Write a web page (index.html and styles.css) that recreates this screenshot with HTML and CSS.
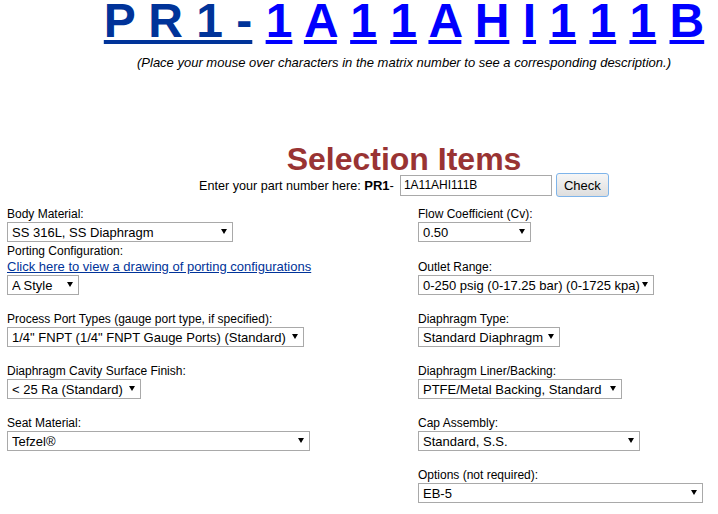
FILE: index.html
```html
<!DOCTYPE html>
<html>
<head>
<meta charset="utf-8">
<title>Selection Items</title>
<link rel="stylesheet" href="styles.css">
</head>
<body>
<div class="top">
  <div class="matrix"><span class="base">P R 1 -</span> <a class="ch" href="#">1</a> <a class="ch" href="#">A</a> <a class="ch" href="#">1</a> <a class="ch" href="#">1</a> <a class="ch" href="#">A</a> <a class="ch" href="#">H</a> <a class="ch" href="#">I</a> <a class="ch" href="#">1</a> <a class="ch" href="#">1</a> <a class="ch" href="#">1</a> <a class="ch" href="#">B</a></div>
  <p class="hint">(Place your mouse over characters in the matrix number to see a corresponding description.)</p>
  <h1 class="title">Selection Items</h1>
  <form class="entry">
    <span class="entry-text"><span class="entry-lbl">Enter your part number here: </span><b>PR1</b>-</span>
    <input class="part" type="text" value="1A11AHI111B">
    <button class="check" type="button">Check</button>
  </form>
</div>

<div class="grid">
  <div class="field">
    <label for="body">Body Material:</label>
    <span class="sel"><select id="body" class="w-body"><option>SS 316L, SS Diaphragm</option></select></span>
  </div>
  <div class="field">
    <label for="flow">Flow Coefficient (Cv):</label>
    <span class="sel"><select id="flow" class="w-flow"><option>0.50</option></select></span>
  </div>

  <div class="field">
    <label for="port">Porting Configuration:</label>
    <a class="link" href="#">Click here to view a drawing of porting configurations</a>
    <span class="sel"><select id="port" class="w-style"><option>A Style</option></select></span>
  </div>
  <div class="field">
    <label for="outlet">Outlet Range:</label>
    <span class="sel"><select id="outlet" class="w-outlet"><option>0-250 psig (0-17.25 bar) (0-1725 kpa)</option></select></span>
  </div>

  <div class="field">
    <label for="ptype">Process Port Types (gauge port type, if specified):</label>
    <span class="sel"><select id="ptype" class="w-ptype"><option>1/4" FNPT (1/4" FNPT Gauge Ports) (Standard)</option></select></span>
  </div>
  <div class="field">
    <label for="dtype">Diaphragm Type:</label>
    <span class="sel"><select id="dtype" class="w-dtype"><option>Standard Diaphragm</option></select></span>
  </div>

  <div class="field">
    <label for="finish">Diaphragm Cavity Surface Finish:</label>
    <span class="sel"><select id="finish" class="w-finish"><option>&lt; 25 Ra (Standard)</option></select></span>
  </div>
  <div class="field">
    <label for="liner">Diaphragm Liner/Backing:</label>
    <span class="sel"><select id="liner" class="w-liner"><option>PTFE/Metal Backing, Standard</option></select></span>
  </div>

  <div class="field">
    <label for="seat">Seat Material:</label>
    <span class="sel"><select id="seat" class="w-seat"><option>Tefzel®</option></select></span>
  </div>
  <div class="field">
    <label for="cap">Cap Assembly:</label>
    <span class="sel"><select id="cap" class="w-cap"><option>Standard, S.S.</option></select></span>
  </div>

  <div class="field field-right">
    <label for="opt">Options (not required):</label>
    <span class="sel"><select id="opt" class="w-opt"><option>EB-5</option></select></span>
  </div>
</div>
</body>
</html>
```
FILE: styles.css
```css
* { box-sizing: border-box; }
html, body { margin: 0; padding: 0; }
body {
  font-family: "Liberation Sans", Arial, sans-serif;
  font-size: 13px;
  color: #000;
  background: #fff;
}

.top {
  margin-left: 90px;
  text-align: center;
}

.matrix {
  font-size: 48px;
  font-weight: bold;
  line-height: 42px;
  white-space: nowrap;
}
.base, .ch {
  text-decoration: underline;
  text-decoration-thickness: 4px;
  text-underline-offset: 3px;
}
.base { color: #003399; }
.ch { color: #0000ff; }

.hint {
  margin: 13px 0 0;
  font-size: 13px;
  font-style: italic;
  line-height: 15px;
}

.title {
  margin: 75px 0 0;
  font-size: 32px;
  line-height: 28px;
  font-weight: bold;
  color: #993333;
}

.entry {
  display: flex;
  justify-content: center;
  align-items: center;
  height: 24px;
  margin: 0;
}
.entry-text { font-size: 13px; white-space: pre; }
.entry-lbl { font-size: 12.6px; }
.part {
  margin: 0 0 0 6px;
  width: 152px;
  height: 21px;
  border: 1px solid #a9a9a9;
  padding: 0 3px;
  font: 12px "Liberation Sans", Arial, sans-serif;
  color: #000;
}
.check {
  margin: 0 0 0 4px;
  width: 53px;
  height: 24px;
  padding: 0;
  border: 1px solid #7eb4ea;
  border-radius: 3px;
  background: linear-gradient(#f6f6f6, #dedede);
  font: 13px "Liberation Sans", Arial, sans-serif;
  color: #000;
}

.grid {
  display: grid;
  grid-template-columns: 411px 1fr;
  grid-template-rows: 35px 53px 52px 52px 52px 52px;
  align-items: end;
  padding-left: 7px;
  margin-top: 10px;
}
.field {
  display: flex;
  flex-direction: column;
  align-items: flex-start;
}
.field-right { grid-column: 2; }
.field label {
  font-size: 12px;
  line-height: 15px;
}
.link {
  font-size: 13px;
  line-height: 16px;
  color: #003399;
  text-decoration: underline;
}

.sel {
  position: relative;
  display: block;
}
.sel select {
  display: block;
  -webkit-appearance: none;
  appearance: none;
  height: 20px;
  margin: 0;
  border: 1px solid #a9a9a9;
  border-radius: 0;
  background: #fff;
  padding: 0 6px 0 4px;
  font: 13px "Liberation Sans", Arial, sans-serif;
  color: #000;
}
.sel::after {
  content: "";
  position: absolute;
  right: 6px;
  top: 7px;
  border-left: 3px solid transparent;
  border-right: 3px solid transparent;
  border-top: 5px solid #000;
  pointer-events: none;
}

.w-body { width: 226px; }
.w-style { width: 72px; }
.w-ptype { width: 297px; }
.w-finish { width: 134px; }
.w-seat { width: 303px; }
.w-flow { width: 113px; }
.w-outlet { width: 236px; }
.w-dtype { width: 142px; }
.w-liner { width: 204px; }
.w-cap { width: 222px; }
.w-opt { width: 285px; }
```
